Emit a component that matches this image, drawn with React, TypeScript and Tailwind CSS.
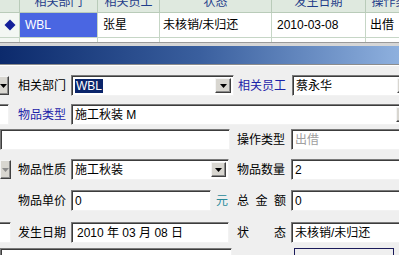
import React from 'react';

const sunken =
  'bg-white border border-t-[#7a7a7a] border-l-[#7a7a7a] border-b-[#f2f2f2] border-r-[#f2f2f2] shadow-[inset_1px_1px_0_#3c3c3c]';
const raised =
  'bg-[#d8d6d0] border border-t-[#f4f4f4] border-l-[#f4f4f4] border-b-[#404040] border-r-[#404040] shadow-[inset_-1px_-1px_0_#8a8a8a]';

function Arrow({ muted }: { muted?: boolean }) {
  return (
    <svg width="7" height="4" viewBox="0 0 7 4">
      <path d="M0 0h7L3.5 4z" fill={muted ? '#8c8c8c' : '#000'} />
    </svg>
  );
}

function DropBtn({ w = 16, muted }: { w?: number; muted?: boolean }) {
  return (
    <div className={`${raised} h-full flex items-center justify-center shrink-0`} style={{ width: w }}>
      <Arrow muted={muted} />
    </div>
  );
}

function Label({ text, blue }: { text: string; blue?: boolean }) {
  return (
    <div className={`w-[49px] shrink-0 text-[12px] leading-none ${blue ? 'text-[#1c22a8]' : 'text-black'}`}>
      {text}
    </div>
  );
}

function SpacedLabel({ chars }: { chars: string[] }) {
  return (
    <div className="w-[49px] shrink-0 flex justify-between text-[12px] leading-none text-black">
      {chars.map((c) => (
        <span key={c}>{c}</span>
      ))}
    </div>
  );
}

function Field({
  w,
  children,
  drop,
  dropW,
  className = '',
}: {
  w: number;
  children?: React.ReactNode;
  drop?: boolean;
  dropW?: number;
  className?: string;
}) {
  return (
    <div className={`${sunken} h-full flex items-stretch shrink-0 p-[2px] ${className}`} style={{ width: w }}>
      <div className="flex-1 flex items-center pl-[1px] text-[12px] text-black overflow-hidden whitespace-nowrap">
        {children}
      </div>
      {drop && <DropBtn w={dropW} />}
    </div>
  );
}

function Row({ mt, children }: { mt: number; children: React.ReactNode }) {
  return (
    <div className="flex items-center h-[21px]" style={{ marginTop: mt }}>
      {children}
    </div>
  );
}

export default function App() {
  const cols = [
    { w: 20, head: '' },
    { w: 78, head: '相关部门' },
    { w: 62, head: '相关员工' },
    { w: 112, head: '状态' },
    { w: 94, head: '发生日期' },
    { w: 60, head: '操作类型' },
  ];

  return (
    <div className="w-[399px] h-[255px] overflow-hidden bg-[#efefef] font-['Liberation_Sans','Noto_Sans_CJK_SC',sans-serif]">
      {/* Grid */}
      <div className="bg-white">
        <div className="flex h-[13px] bg-[#dfe9df] border-b border-[#b9cbb9] overflow-hidden">
          {cols.map((c, i) => (
            <div
              key={i}
              className="shrink-0 border-r border-[#b9cbb9] text-[12px] leading-[12px] text-[#1f3d8a] text-center overflow-hidden"
              style={{ width: c.w }}
            >
              <div className="-mt-[4px] whitespace-nowrap">{c.head}</div>
            </div>
          ))}
        </div>
        <div className="flex h-[25px] border-b border-[#c6d6c6]">
          <div className="w-[20px] shrink-0 border-r border-[#c6d6c6] bg-[#f3f7f3] flex items-center justify-center">
            <svg width="12" height="12" viewBox="0 0 12 12">
              <path d="M6 0.5L11.5 6L6 11.5L0.5 6z" fill="#14209a" />
            </svg>
          </div>
          <div className="w-[78px] shrink-0 border-r border-[#c6d6c6] bg-[#4a66e2] text-white text-[12px] flex items-center pl-[5px]">
            WBL
          </div>
          <div className="w-[62px] shrink-0 border-r border-[#c6d6c6] text-[12px] flex items-center pl-[5px]">张星</div>
          <div className="w-[112px] shrink-0 border-r border-[#c6d6c6] text-[12px] flex items-center pl-[3px]">
            未核销/未归还
          </div>
          <div className="w-[94px] shrink-0 border-r border-[#c6d6c6] text-[12px] flex items-center pl-[5px]">
            2010-03-08
          </div>
          <div className="w-[60px] shrink-0 text-[12px] flex items-center pl-[4px]">出借</div>
        </div>
        <div className="flex h-[4px]">
          <div className="w-[20px] shrink-0 border-r border-[#c6d6c6] bg-[#f3f7f3]" />
          <div className="w-[78px] shrink-0 border-r border-[#c6d6c6]" />
          <div className="w-[62px] shrink-0 border-r border-[#c6d6c6]" />
          <div className="w-[112px] shrink-0 border-r border-[#c6d6c6]" />
          <div className="w-[94px] shrink-0 border-r border-[#c6d6c6]" />
        </div>
      </div>
      <div className="h-[1px] bg-[#9a9a9a]" />
      <div className="h-[3px] bg-[#d6d6d6]" />

      {/* Title bar */}
      <div className="h-[18px] bg-gradient-to-r from-[#0c2a6c] via-[#3a5f9e] to-[#8eb0de]" />
      <div className="h-[1px] bg-[#8c8c8c]" />
      <div className="h-[1px] bg-white" />

      {/* Form */}
      <div className="flex flex-col">
        <Row mt={9}>
          <div className="w-[12px] h-[19px] shrink-0 overflow-hidden flex justify-end pr-[3px]">
            <DropBtn w={12} />
          </div>
          <div className="ml-[6px]">
            <Label text="相关部门" />
          </div>
          <div className="ml-[4px] h-full">
            <Field w={163} drop>
              <span className="bg-[#0a246a] text-white px-[1px] leading-[14px]">WBL</span>
            </Field>
          </div>
          <div className="ml-[4px]">
            <Label text="相关员工" blue />
          </div>
          <div className="ml-[5px] h-full">
            <Field w={124} drop>
              蔡永华
            </Field>
          </div>
        </Row>

        <Row mt={8}>
          <div className="w-[12px] h-full shrink-0 overflow-hidden flex justify-end pr-[3px]">
            <div className={`${sunken} w-[20px] h-full shrink-0`} />
          </div>
          <div className="ml-[6px]">
            <Label text="物品类型" blue />
          </div>
          <div className="ml-[4px] h-full">
            <Field w={344} drop>
              施工秋装 M
            </Field>
          </div>
        </Row>

        <Row mt={4}>
          <div className="h-full">
            <Field w={230} />
          </div>
          <div className="ml-[7px]">
            <Label text="操作类型" />
          </div>
          <div className="ml-[5px] h-full">
            <Field w={124}>
              <span className="text-[#a0a0a0]">出借</span>
            </Field>
          </div>
        </Row>

        <Row mt={9}>
          <div className="w-[12px] h-[19px] shrink-0 overflow-hidden flex justify-end pr-[1px]">
            <div className={`${raised} w-[14px] h-full flex items-center justify-center`}>
              <Arrow muted />
            </div>
          </div>
          <div className="ml-[6px]">
            <Label text="物品性质" />
          </div>
          <div className="ml-[4px] h-full">
            <Field w={158} drop dropW={15}>
              施工秋装
            </Field>
          </div>
          <div className="ml-[8px]">
            <Label text="物品数量" />
          </div>
          <div className="ml-[5px] h-full">
            <Field w={124}>2</Field>
          </div>
        </Row>

        <Row mt={10}>
          <div className="w-[12px] shrink-0" />
          <div className="ml-[6px]">
            <Label text="物品单价" />
          </div>
          <div className="ml-[4px] h-full">
            <Field w={140}>0</Field>
          </div>
          <div className="w-[26px] shrink-0 pl-[5px] text-[12px] leading-none text-[#2a8a9a]">元</div>
          <SpacedLabel chars={['总', '金', '额']} />
          <div className="ml-[5px] h-full">
            <Field w={124}>0</Field>
          </div>
        </Row>

        <Row mt={11}>
          <div className="w-[12px] h-full shrink-0 overflow-hidden flex justify-end pr-[1px]">
            <div className={`${sunken} w-[20px] h-full shrink-0`} />
          </div>
          <div className="ml-[6px]">
            <Label text="发生日期" />
          </div>
          <div className="ml-[4px] h-full">
            <Field w={158}>
              <span className="pl-[2px]">2010 年 03 月 08 日</span>
            </Field>
          </div>
          <div className="ml-[8px]">
            <SpacedLabel chars={['状', '态']} />
          </div>
          <div className="ml-[5px] h-full">
            <Field w={124}>未核销/未归还</Field>
          </div>
        </Row>

        <Row mt={5}>
          <div className="h-full">
            <Field w={232} />
          </div>
          <div className="ml-[62px] w-[100px] h-full border border-[#1a1a5a] bg-[#efefef]" />
        </Row>
      </div>
    </div>
  );
}
